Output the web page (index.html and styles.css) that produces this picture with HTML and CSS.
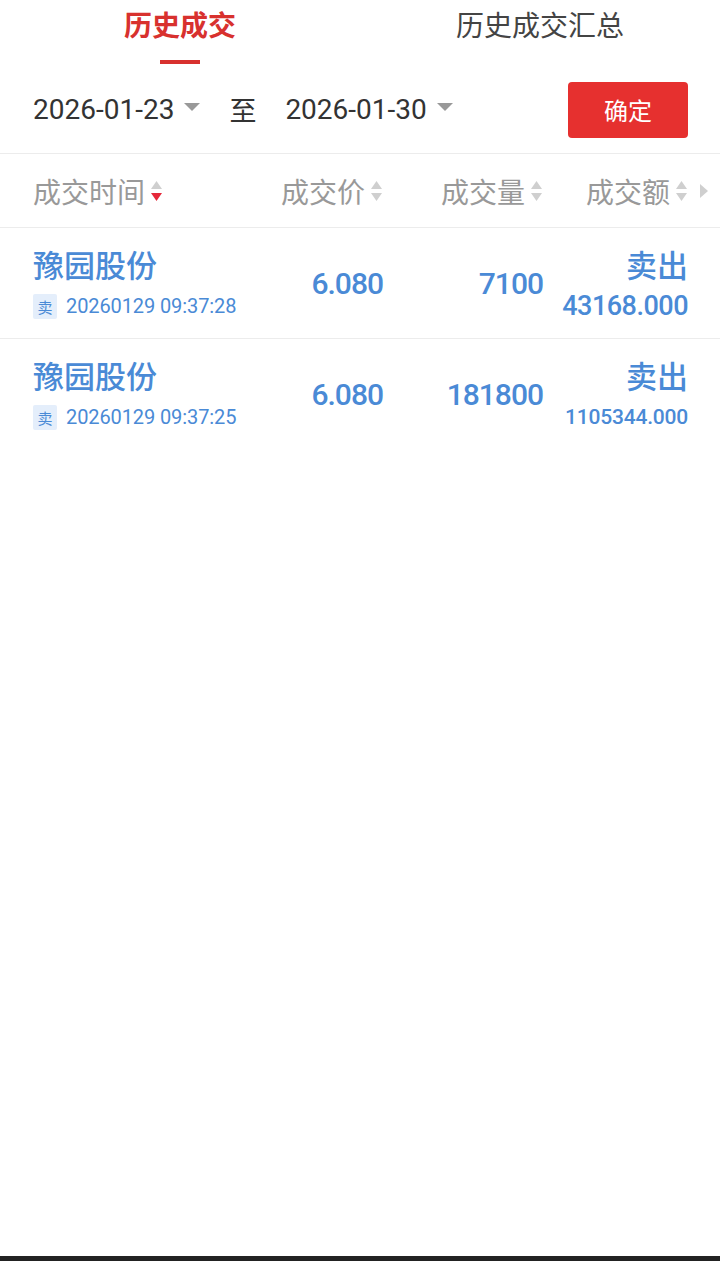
FILE: index.html
```html
<!DOCTYPE html>
<html lang="zh-CN">
<head>
  <meta charset="UTF-8">
  <title>历史成交</title>
  <link rel="stylesheet" href="styles.css">
</head>
<body>
  <div class="page">
    <div class="tabs">
      <div class="tab active">历史成交</div>
      <div class="tab">历史成交汇总</div>
    </div>

    <div class="filter">
      <div class="date-pick">2026-01-23<span class="caret"></span></div>
      <div class="to">至</div>
      <div class="date-pick">2026-01-30<span class="caret"></span></div>
      <button class="confirm">确定</button>
    </div>

    <div class="thead">
      <div class="th th-left">成交时间<svg class="sort" viewBox="0 0 13 26"><polygon points="6.5,3 12,11 1,11" fill="#cfcfcf"/><polygon points="1,15 12,15 6.5,23" fill="#e5283a"/></svg></div>
      <div class="th">成交价<svg class="sort" viewBox="0 0 13 26"><polygon points="6.5,3 12,11 1,11" fill="#cfcfcf"/><polygon points="1,15 12,15 6.5,23" fill="#cfcfcf"/></svg></div>
      <div class="th">成交量<svg class="sort" viewBox="0 0 13 26"><polygon points="6.5,3 12,11 1,11" fill="#cfcfcf"/><polygon points="1,15 12,15 6.5,23" fill="#cfcfcf"/></svg></div>
      <div class="th">成交额<svg class="sort" viewBox="0 0 13 26"><polygon points="6.5,3 12,11 1,11" fill="#cfcfcf"/><polygon points="1,15 12,15 6.5,23" fill="#cfcfcf"/></svg></div>
      <svg class="more" viewBox="0 0 8 14"><polygon points="0,0 8,7 0,14" fill="#cfcfcf"/></svg>
    </div>

    <div class="list">
      <div class="row">
        <div class="cell-name">
          <div class="name">豫园股份</div>
          <div class="meta"><span class="badge">卖</span>20260129 09:37:28</div>
        </div>
        <div class="num">6.080</div>
        <div class="num">7100</div>
        <div class="cell-amount">
          <div class="side">卖出</div>
          <div class="amount">43168.000</div>
        </div>
      </div>
      <div class="row">
        <div class="cell-name">
          <div class="name">豫园股份</div>
          <div class="meta"><span class="badge">卖</span>20260129 09:37:25</div>
        </div>
        <div class="num">6.080</div>
        <div class="num">181800</div>
        <div class="cell-amount">
          <div class="side">卖出</div>
          <div class="amount small">1105344.000</div>
        </div>
      </div>
    </div>

    <div class="navbar"></div>
  </div>
</body>
</html>
```

FILE: styles.css
```css
html, body {
  margin: 0;
  padding: 0;
  background: #fff;
}
body {
  font-family: Roboto, "Noto Sans CJK SC", sans-serif;
}
.page {
  min-height: 100vh;
  display: flex;
  flex-direction: column;
}

/* tabs */
.tabs {
  display: flex;
  height: 66px;
}
.tab {
  flex: 1;
  display: flex;
  flex-direction: column;
  align-items: center;
  font-family: "Noto Sans CJK SC", sans-serif;
  font-size: 28px;
  line-height: 48px;
  color: #444;
}
.tab.active {
  color: #d8312e;
  font-weight: 700;
}
.tab.active::after {
  content: "";
  width: 40px;
  height: 4px;
  margin-top: 12px;
  background: #d8312e;
}

/* date filter */
.filter {
  height: 87px;
  display: flex;
  align-items: center;
  padding: 0 32px 0 33px;
  border-bottom: 1px solid #ececec;
}
.date-pick {
  display: flex;
  align-items: center;
  font-size: 28px;
  color: #333;
}
.caret {
  width: 0;
  height: 0;
  margin-left: 10px;
  margin-top: -6px;
  border-left: 8px solid transparent;
  border-right: 8px solid transparent;
  border-top: 8px solid #999;
}
.to {
  font-family: "Noto Sans CJK SC", sans-serif;
  font-size: 27px;
  color: #333;
  margin: 0 29px 0 29px;
}
.confirm {
  margin-left: auto;
  width: 120px;
  height: 56px;
  border: none;
  border-radius: 4px;
  background: #e6302f;
  color: #fff;
  font-family: "Noto Sans CJK SC", sans-serif;
  font-size: 24px;
  cursor: pointer;
}

/* table header */
.thead {
  position: relative;
  height: 73px;
  display: grid;
  grid-template-columns: 1fr 120px 160px 145px;
  align-items: center;
  padding: 0 32px 0 33px;
  border-bottom: 1px solid #ececec;
}
.th {
  display: flex;
  align-items: center;
  justify-content: flex-end;
  font-family: "Noto Sans CJK SC", sans-serif;
  font-size: 28px;
  color: #999;
}
.th-left {
  justify-content: flex-start;
}
.sort {
  width: 13px;
  height: 26px;
  margin-left: 5px;
}
.more {
  position: absolute;
  right: 12px;
  top: 30px;
  width: 8px;
  height: 14px;
}

/* rows */
.list {
  flex: 1;
}
.row {
  height: 110px;
  box-sizing: border-box;
  display: grid;
  grid-template-columns: 1fr 120px 160px 145px;
  padding: 18px 32px 0 33px;
  color: #4a8ad6;
}
.row + .row {
  height: 111px;
  border-top: 1px solid #ececec;
}
.name {
  font-family: "Noto Sans CJK SC", sans-serif;
  font-size: 31px;
  font-weight: 500;
  line-height: 36px;
}
.meta {
  display: flex;
  align-items: center;
  margin-top: 7px;
  height: 34px;
  font-size: 20px;
  letter-spacing: -0.1px;
  white-space: nowrap;
}
.badge {
  width: 24px;
  height: 25px;
  margin-right: 9px;
  background: #e4eefb;
  border-radius: 2px;
  font-family: "Noto Sans CJK SC", sans-serif;
  font-size: 15px;
  line-height: 25px;
  letter-spacing: 0;
  text-align: center;
}
.num {
  text-align: right;
  font-size: 30px;
  font-weight: 500;
  letter-spacing: -1px;
  line-height: 36px;
  margin-top: 20px;
}
.cell-amount {
  text-align: right;
}
.side {
  font-family: "Noto Sans CJK SC", sans-serif;
  font-size: 31px;
  font-weight: 500;
  line-height: 36px;
}
.amount {
  margin-top: 7px;
  font-size: 27px;
  font-weight: 500;
  letter-spacing: -0.5px;
  line-height: 34px;
}
.amount.small {
  font-size: 21px;
  letter-spacing: -0.2px;
}

.navbar {
  height: 5px;
  background: #222;
}
```
